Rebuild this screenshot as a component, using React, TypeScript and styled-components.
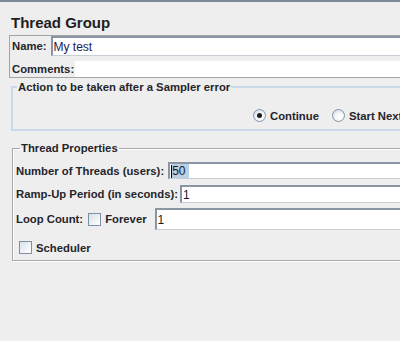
import styled, { createGlobalStyle } from "styled-components";

const GlobalStyle = createGlobalStyle`
  html, body {
    margin: 0;
    padding: 0;
    background: #eeeeee;
    overflow: hidden;
  }
  body {
    font-family: "Liberation Sans", Arial, sans-serif;
    font-size: 11.3px;
    color: #222;
  }
`;

const App = () => {
  return (
    <>
      <GlobalStyle />
      <Page>
        <TopRule />
        <Title>{"Thread Group"}</Title>
        <NameBox>
          <FieldRow>
            <Label>{"Name:"}</Label>
            <TextField $left={4} $height={20}>
              <FieldText $color="#1c1c52">{"My test"}</FieldText>
            </TextField>
          </FieldRow>
          <FieldRow $top={5}>
            <Label>{"Comments:"}</Label>
            <CommentArea />
          </FieldRow>
        </NameBox>

        <ActionSet>
          <Legend>{"Action to be taken after a Sampler error"}</Legend>
          <RadioRow>
            <RadioOption>
              <Radio $checked />
              {"Continue"}
            </RadioOption>
            <RadioOption>
              <Radio />
              {"Start Next Thread Loop"}
            </RadioOption>
          </RadioRow>
        </ActionSet>

        <PropsSet>
          <Legend>{"Thread Properties"}</Legend>
          <PropRow $top={7}>
            <Label>{"Number of Threads (users):"}</Label>
            <TextField $left={4} $height={17}>
              <Caret />
              <Selected>{"50"}</Selected>
            </TextField>
          </PropRow>
          <PropRow $top={6}>
            <Label>{"Ramp-Up Period (in seconds):"}</Label>
            <TextField $left={2} $height={18}>
              <FieldText>{"1"}</FieldText>
            </TextField>
          </PropRow>
          <PropRow $top={5}>
            <Label>{"Loop Count:"}</Label>
            <CheckOption $left={5}>
              <Checkbox />
              {"Forever"}
            </CheckOption>
            <TextField $left={8} $height={22}>
              <FieldText>{"1"}</FieldText>
            </TextField>
          </PropRow>
          <CheckOption $left={3} $top={11}>
            <Checkbox />
            {"Scheduler"}
          </CheckOption>
        </PropsSet>
      </Page>
    </>
  );
};

export default App;

const Page = styled.div`
  width: 620px;
  height: 341px;
  display: flex;
  flex-direction: column;
`;

const TopRule = styled.div`
  height: 2px;
  flex-shrink: 0;
  background: #7d8896;
`;

const Title = styled.div`
  margin: 11px 0 0 11px;
  height: 20px;
  line-height: 20px;
  font-size: 15px;
  font-weight: bold;
  color: #1e1e1e;
`;

const NameBox = styled.div`
  margin: 2px 0 0 9px;
  border: 1px solid #a3a3a3;
  border-right: none;
  padding: 0 0 0 2px;
  display: flex;
  flex-direction: column;
`;

const FieldRow = styled.div<{ $top?: number }>`
  display: flex;
  align-items: center;
  margin-top: ${(p) => p.$top ?? 0}px;
`;

const Label = styled.span`
  font-weight: bold;
  color: #25252b;
  white-space: nowrap;
`;

const TextField = styled.div<{ $left?: number; $height: number }>`
  flex: 1;
  box-sizing: border-box;
  height: ${(p) => p.$height}px;
  margin-left: ${(p) => p.$left ?? 0}px;
  background: #fff;
  border-top: 2px solid #8995a3;
  border-left: 2px solid #8995a3;
  border-bottom: 1px solid #c8ced6;
  display: flex;
  align-items: center;
  padding-left: 1px;
`;

const FieldText = styled.span<{ $color?: string }>`
  font-size: 12px;
  color: ${(p) => p.$color ?? "#1a1a1a"};
`;

const Caret = styled.span`
  width: 1px;
  height: 13px;
  background: #000;
`;

const Selected = styled.span`
  background: #b8cfe5;
  color: #1a1a1a;
  font-size: 12px;
  line-height: 14px;
  padding-right: 3px;
`;

const CommentArea = styled.div`
  flex: 1;
  height: 16px;
  margin-left: 1px;
  background: #fff;
`;

const Legend = styled.legend`
  padding: 0 1px;
  margin-left: 4px;
  font-weight: bold;
  color: #25252b;
  line-height: 14px;
`;

const ActionSet = styled.fieldset`
  margin: 2px 0 0 11px;
  padding: 0;
  border: 2px solid #c9d9ea;
  border-right: none;
  height: 51px;
  box-sizing: border-box;
  min-inline-size: 0;
`;

const RadioRow = styled.div`
  display: flex;
  gap: 13px;
  margin-top: 15px;
  padding-left: 240px;
`;

const RadioOption = styled.label`
  display: flex;
  align-items: center;
  gap: 4px;
  font-weight: bold;
  color: #25252b;
  white-space: nowrap;
`;

const Radio = styled.span<{ $checked?: boolean }>`
  width: 11px;
  height: 11px;
  border-radius: 50%;
  border: 1px solid #8494a6;
  background: radial-gradient(circle at 60% 65%, #ffffff 0%, #f2f4f7 45%, #c9d2dc 100%);
  display: flex;
  align-items: center;
  justify-content: center;
  &::after {
    content: "";
    width: 5px;
    height: 5px;
    border-radius: 50%;
    background: #1d1d1d;
    display: ${(p) => (p.$checked ? "block" : "none")};
  }
`;

const PropsSet = styled.fieldset`
  margin: 10px 0 0 12px;
  padding: 0 0 0 3px;
  border: 1px solid #a8a8a8;
  box-shadow: inset 1px 1px 0 #fff, 1px 1px 0 #fff;
  border-right: none;
  min-inline-size: 0;
  height: 120px;
  box-sizing: border-box;
  display: flex;
  flex-direction: column;
`;

const PropRow = styled.div<{ $top?: number }>`
  display: flex;
  align-items: center;
  margin-top: ${(p) => p.$top ?? 0}px;
`;

const CheckOption = styled.label<{ $left?: number; $top?: number }>`
  display: flex;
  align-items: center;
  gap: 4px;
  margin-left: ${(p) => p.$left ?? 0}px;
  margin-top: ${(p) => p.$top ?? 0}px;
  font-weight: bold;
  color: #25252b;
  white-space: nowrap;
`;

const Checkbox = styled.span`
  width: 11px;
  height: 11px;
  border: 1px solid #7f90a3;
  background: linear-gradient(135deg, #d7dfe8 0%, #eef2f6 55%, #ffffff 100%);
`;
